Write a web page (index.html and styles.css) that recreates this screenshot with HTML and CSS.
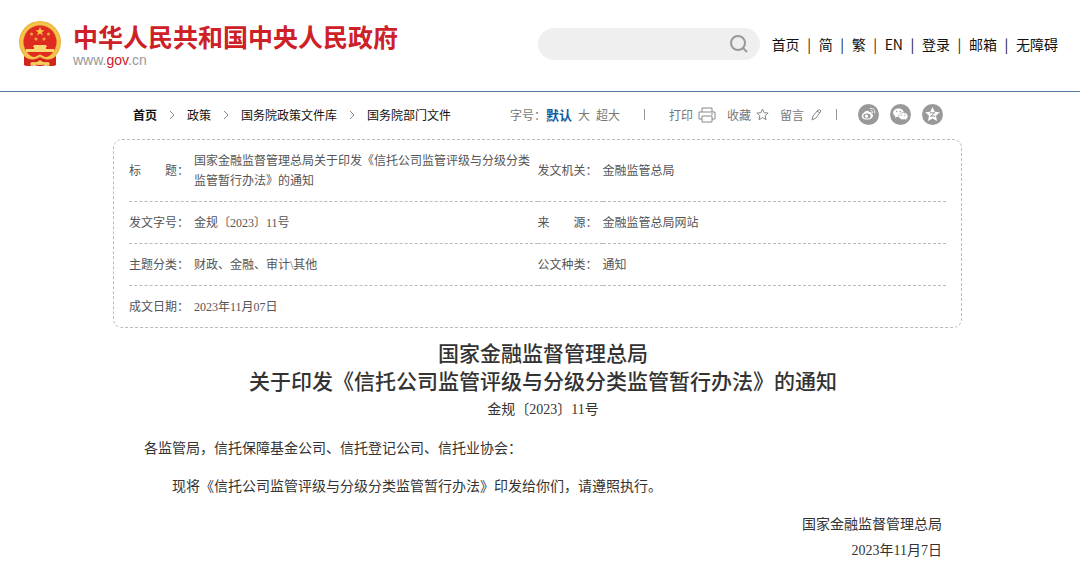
FILE: index.html
```html
<!DOCTYPE html>
<html lang="zh-CN">
<head>
  <meta charset="UTF-8">
  <meta name="viewport" content="width=device-width, initial-scale=1.0">
  <title>国家金融监督管理总局关于印发《信托公司监管评级与分级分类监管暂行办法》的通知</title>
  <link rel="stylesheet" href="styles.css">
</head>
<body>
  <header class="header">
    <a class="logo" href="#">
      <svg class="emblem" viewBox="0 0 42 46" aria-hidden="true">
        <path d="M5 31L5 44Q10 46 15 44L21 45L27 44Q32 46 37 44L37 31Z" fill="#d3251c"/>
        <circle cx="21" cy="21" r="21" fill="#eeb73a"/>
        <circle cx="21" cy="21" r="18.5" fill="none" stroke="#f4c850" stroke-width="2"/>
        <circle cx="21" cy="21" r="16.5" fill="#e02b20"/>
        <path d="M21 6l1.2 3.1 3.3.1-2.6 2 .9 3.2-2.8-1.8-2.8 1.8.9-3.2-2.6-2 3.3-.1z" fill="#f5c445"/>
        <g fill="#e9a93a">
          <circle cx="12.500" cy="13" r="1.500"/>
          <circle cx="29.500" cy="13" r="1.500"/>
          <circle cx="17" cy="18" r="1.500"/>
          <circle cx="25" cy="18" r="1.500"/>
        </g>
        <path d="M15 24h12l1 2h-1v2h8v3H7v-3h8v-2h-1z" fill="#f8d873"/>
        <path d="M5 36L13 38Q21 32 29 38L37 36V44Q32 46 27 44L21 45L15 44Q10 46 5 44Z" fill="#d3251c"/>
        <path d="M6 32q7 6 12 3 3-3 6 0 5 3 12-3l1 3q-6 5-11 3-2 0-5-2-3 2-5 2-5 2-11-3z" fill="#f3c34b"/>
        <path d="M12 45q-2-4 2-4 4 1 7-2 3 3 7 2 4 0 2 4-4-2-9-1-5-1-9 1z" fill="#f6ce5c"/>
      </svg>
      <span class="logo-text">
        <strong class="logo-name">中华人民共和国中央人民政府</strong>
        <span class="logo-url">www.<em>gov</em>.cn</span>
      </span>
    </a>
    <form class="search">
      <input type="text" class="search-input" aria-label="搜索">
      <button type="button" class="search-btn" aria-label="搜索">
        <svg width="20" height="20" viewBox="0 0 20 20" fill="none" stroke="#999" stroke-width="2">
          <circle cx="9" cy="9" r="7"/>
          <path d="M14 14l4 4"/>
        </svg>
      </button>
    </form>
    <nav class="top-nav">
      <a href="#">首页</a><span>|</span>
      <a href="#">简</a><span>|</span>
      <a href="#">繁</a><span>|</span>
      <a href="#">EN</a><span>|</span>
      <a href="#">登录</a><span>|</span>
      <a href="#">邮箱</a><span>|</span>
      <a href="#">无障碍</a>
    </nav>
  </header>

  <main class="main">
    <div class="bar">
      <nav class="crumbs">
        <a href="#" class="home">首页</a>
        <svg class="arrow" viewBox="0 0 6 10"><path d="M1 1l4 4-4 4"/></svg>
        <a href="#">政策</a>
        <svg class="arrow" viewBox="0 0 6 10"><path d="M1 1l4 4-4 4"/></svg>
        <a href="#">国务院政策文件库</a>
        <svg class="arrow" viewBox="0 0 6 10"><path d="M1 1l4 4-4 4"/></svg>
        <a href="#">国务院部门文件</a>
      </nav>
      <div class="tools">
        <div class="sizes">
          <span>字号：</span>
          <button type="button" class="active">默认</button>
          <button type="button">大</button>
          <button type="button">超大</button>
        </div>
        <span class="line"></span>
        <div class="actions">
          <button type="button">打印
            <svg width="18" height="16" viewBox="0 0 18 16"><path d="M4 5V1h10v4M4 12H1V5h16v7h-3M4 9h10v6H4zM13 7h2"/></svg>
          </button>
          <button type="button">收藏
            <svg width="13" height="13" viewBox="0 0 13 13"><path d="M6.500 1l1.600 3.700 4 .3-3 2.700.9 4-3.500-2.100L3 11.700l.9-4L.9 5l4-.3z"/></svg>
          </button>
          <button type="button">留言
            <svg width="13" height="13" viewBox="0 0 13 13"><path d="M4 8l5-6q2-1 3 1l-5 7-4 2zM8 3l3 2"/></svg>
          </button>
        </div>
        <span class="line"></span>
        <div class="share">
          <a href="#" aria-label="微博">
            <svg viewBox="0 0 21 21">
              <circle cx="10.500" cy="10.500" r="10.500" fill="#999"/>
              <path d="M9 7c1-.6 2.200-.3 1.800 1.200 1.700-.6 3-.3 2.700 1.200 3 1.200 1.500 6-4 6.200-6 .2-7.500-4-3.500-7.200C7 7.500 8 6.800 9 7z" fill="#fff"/>
              <ellipse cx="9" cy="12" rx="3.700" ry="2.600" fill="#999"/>
              <circle cx="8.500" cy="12.200" r="1.600" fill="#fff"/>
              <path d="M12 4.500c3.500-.7 5.500 2 4.500 5M12.500 6.700c1.500-.2 2.300.8 2 2.200" fill="none" stroke="#fff"/>
            </svg>
          </a>
          <a href="#" aria-label="微信">
            <svg viewBox="0 0 21 21">
              <circle cx="10.500" cy="10.500" r="10.500" fill="#999"/>
              <path d="M8.500 4.500c3 0 5.300 1.900 5.300 4.200 0 2.400-2.300 4.300-5.300 4.300l-1.500-.2L5 14l.4-1.900C4 11.300 3.200 10.200 3.200 8.700c0-2.300 2.300-4.200 5.300-4.200z" fill="#fff"/>
              <path d="M13.300 8.500c2.700 0 4.700 1.600 4.700 3.700 0 1.200-.6 2-1.500 2.700l.3 1.600-1.800-1-1.700.2c-2.600 0-4.600-1.500-4.600-3.500s2-3.700 4.600-3.700z" fill="#fff" stroke="#999" stroke-width=".6"/>
              <g fill="#999"><circle cx="6.700" cy="7.500" r=".7"/><circle cx="10.300" cy="7.500" r=".7"/><circle cx="11.800" cy="11.200" r=".6"/><circle cx="14.800" cy="11.200" r=".6"/></g>
            </svg>
          </a>
          <a href="#" aria-label="QQ空间">
            <svg viewBox="0 0 21 21">
              <circle cx="10.500" cy="10.500" r="10.500" fill="#999"/>
              <path d="M10.500 3l2.200 4.700 5.100.6-3.800 3.500 1 5.100-4.500-2.500L6 16.900l1-5.100-3.800-3.500 5.100-.6z" fill="#fff"/>
              <path d="M7.800 8.800h5L8.500 12.200h5" fill="none" stroke="#999"/>
            </svg>
          </a>
        </div>
      </div>
    </div>

    <div class="info">
      <table class="info-table">
        <tr>
          <th scope="row">标　　题：</th>
          <td>国家金融监督管理总局关于印发《信托公司监管评级与分级分类监管暂行办法》的通知</td>
          <th scope="row">发文机关：</th>
          <td>金融监管总局</td>
        </tr>
        <tr>
          <th scope="row">发文字号：</th>
          <td>金规〔2023〕11号</td>
          <th scope="row">来　　源：</th>
          <td>金融监管总局网站</td>
        </tr>
        <tr>
          <th scope="row">主题分类：</th>
          <td>财政、金融、审计\其他</td>
          <th scope="row">公文种类：</th>
          <td>通知</td>
        </tr>
        <tr>
          <th scope="row">成文日期：</th>
          <td colspan="3">2023年11月07日</td>
        </tr>
      </table>
    </div>

    <article class="article">
      <h1>国家金融监督管理总局<br>关于印发《信托公司监管评级与分级分类监管暂行办法》的通知</h1>
      <p class="number">金规〔2023〕11号</p>
      <p>各监管局，信托保障基金公司、信托登记公司、信托业协会：</p>
      <p class="indent">现将《信托公司监管评级与分级分类监管暂行办法》印发给你们，请遵照执行。</p>
      <p class="sign">国家金融监督管理总局<br>2023年11月7日</p>
    </article>
  </main>
</body>
</html>
```
FILE: styles.css
```css
* {
  box-sizing: border-box;
}

body {
  margin: 0;
  background: #fff;
  color: #333;
  font-family: "Liberation Serif", "Noto Sans CJK SC", sans-serif;
  font-size: 12px;
}

a {
  color: inherit;
  text-decoration: none;
}

button {
  padding: 0;
  border: none;
  background: none;
  color: inherit;
  font: inherit;
  cursor: pointer;
}

svg {
  display: block;
  flex: none;
}

/* header */
.header {
  display: flex;
  align-items: center;
  height: 92px;
  padding: 0 22px 4px 19px;
  border-bottom: 1px solid #5579a5;
}

.logo {
  display: flex;
  align-items: center;
  gap: 12px;
}

.emblem {
  width: 42px;
  height: 46px;
}

.logo-text {
  display: flex;
  flex-direction: column;
}

.logo-name {
  color: #cd2127;
  font-family: "Noto Sans CJK SC", sans-serif;
  font-size: 25px;
  line-height: 32px;
}

.logo-url {
  color: #999;
  font-family: "Liberation Sans", Arial, sans-serif;
  font-size: 14px;
  line-height: 16px;
}

.logo-url em {
  color: #cd2127;
  font-style: normal;
}

.search {
  display: flex;
  align-items: center;
  width: 222px;
  height: 32px;
  margin-left: auto;
  padding-right: 11px;
  border-radius: 16px;
  background: #efefef;
}

.search-input {
  flex: 1;
  min-width: 0;
  height: 32px;
  padding: 0 0 0 16px;
  border: none;
  outline: none;
  background: none;
}

.top-nav {
  display: flex;
  gap: 7px;
  margin-left: 12px;
  color: #111;
  font-family: "Noto Sans CJK SC", sans-serif;
  font-size: 14px;
  line-height: 20px;
}

.top-nav span {
  width: 5px;
  text-align: center;
}

/* breadcrumb and tools */
.main {
  padding: 0 118px 0 113px;
}

.bar {
  display: flex;
  align-items: center;
  justify-content: space-between;
  height: 47px;
  padding: 0 19px 2px 20px;
  font-family: "Noto Sans CJK SC", sans-serif;
}

.crumbs,
.tools,
.sizes,
.actions,
.actions button,
.share {
  display: flex;
  align-items: center;
}

.crumbs {
  gap: 12px;
  color: #111;
}

.crumbs .home {
  font-weight: bold;
}

.arrow {
  width: 6px;
  height: 10px;
  fill: none;
  stroke: #888;
}

.tools {
  color: #777;
}

.sizes {
  gap: 6px;
}

.sizes span {
  margin-right: -6px;
}

.sizes .active {
  color: #0f5a9c;
  font-size: 13px;
  font-weight: bold;
}

.line {
  width: 1px;
  height: 11px;
  margin: 0 24px;
  background: #999;
}

.actions {
  gap: 11px;
}

.actions button {
  gap: 5px;
}

.actions svg {
  fill: none;
  stroke: #888;
}

.actions + .line {
  margin: 0 21px 0 14px;
}

.share {
  gap: 11px;
}

.share svg {
  width: 21px;
  height: 21px;
}

/* document info */
.info {
  padding: 0 15px;
  border: 1px dashed #bbb;
  border-radius: 9px;
}

.info-table {
  width: 100%;
  border-collapse: collapse;
  table-layout: fixed;
  color: #555;
  line-height: 20px;
}

.info-table th,
.info-table td {
  padding: 11px 0 10px;
  border-bottom: 1px dashed #bbb;
  font-weight: normal;
  text-align: left;
}

.info-table th {
  width: 65px;
}

.info-table tr:last-child th,
.info-table tr:last-child td {
  border-bottom: none;
}

/* article */
.article {
  padding: 12px 20px 20px 31px;
  font-size: 14px;
  line-height: 26px;
}

.article h1 {
  margin: 0;
  font-size: 21px;
  font-weight: 500;
  line-height: 28px;
  text-align: center;
}

.article p {
  margin: 0 0 12px;
}

.article .number {
  line-height: 28px;
  text-align: center;
}

.article .indent {
  text-indent: 2em;
}

.article .sign {
  text-align: right;
}
```
